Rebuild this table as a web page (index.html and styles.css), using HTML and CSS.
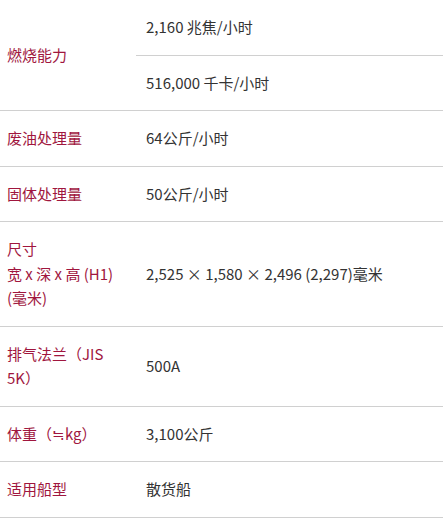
FILE: index.html
```html
<!DOCTYPE html>
<html lang="zh-CN">
<head>
<meta charset="utf-8">
<link rel="stylesheet" href="styles.css">
</head>
<body>
<table class="spec">
  <tbody>
    <tr>
      <th class="label" rowspan="2">燃烧能力</th>
      <td class="value">2,160 兆焦/小时</td>
    </tr>
    <tr>
      <td class="value">516,000 千卡/小时</td>
    </tr>
    <tr>
      <th class="label">废油处理量</th>
      <td class="value">64公斤/小时</td>
    </tr>
    <tr>
      <th class="label">固体处理量</th>
      <td class="value">50公斤/小时</td>
    </tr>
    <tr>
      <th class="label">尺寸<br>宽 x 深 x 高 (H1)<br>(毫米)</th>
      <td class="value">2,525 × 1,580 × 2,496 (2,297)毫米</td>
    </tr>
    <tr>
      <th class="label">排气法兰（JIS 5K）</th>
      <td class="value">500A</td>
    </tr>
    <tr>
      <th class="label">体重（≒kg）</th>
      <td class="value">3,100公斤</td>
    </tr>
    <tr>
      <th class="label">适用船型</th>
      <td class="value">散货船</td>
    </tr>
  </tbody>
</table>
</body>
</html>
```
FILE: styles.css
```css
html, body {
  margin: 0;
  padding: 0;
  background: #fff;
}
body {
  font-family: "Noto Sans CJK SC", "Noto Sans", sans-serif;
  font-size: 15px;
  line-height: 24.5px;
  color: #333;
}
.spec {
  width: 443px;
  border-collapse: collapse;
  table-layout: fixed;
}
.spec td, .spec th {
  border-bottom: 1px solid #d0d0d0;
  padding: 15px 10px;
  vertical-align: middle;
  text-align: left;
  font-weight: normal;
}
.spec .label {
  width: 119px;
  padding-left: 7px;
  padding-right: 10px;
  color: #a0163e;
}
.spec .value {
  color: #333;
}
```
